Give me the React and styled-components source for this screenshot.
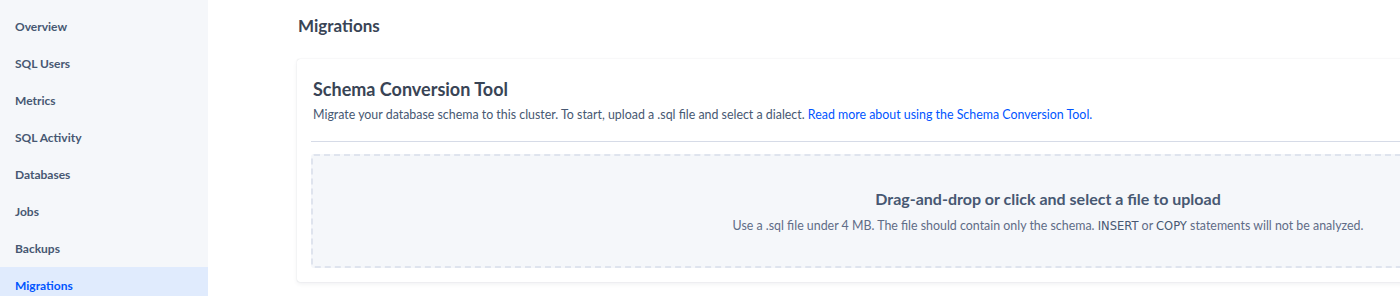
import React from "react";
import styled, { createGlobalStyle } from "styled-components";

const Global = createGlobalStyle`
  html, body { margin: 0; padding: 0; background: #ffffff; }
  body { font-family: Lato, "Open Sans", "Noto Sans", sans-serif; -webkit-font-smoothing: antialiased; }
  * { box-sizing: border-box; }
`;

const Layout = styled.div`
  display: flex;
  width: 1400px;
  height: 296px;
  overflow: hidden;
`;

const Sidebar = styled.nav`
  flex: 0 0 208px;
  background: #f5f7fa;
  padding-top: 8px;
  display: flex;
  flex-direction: column;
`;

const NavItem = styled.div`
  height: 37px;
  flex: 0 0 37px;
  display: flex;
  align-items: center;
  padding-left: 15px;
  font-size: 12px;
  font-weight: 700;
  color: ${(p) => (p.$active ? "#0055ff" : "#475872")};
  background: ${(p) => (p.$active ? "#e0ebfd" : "transparent")};
`;

const Main = styled.main`
  flex: 1;
  min-width: 0;
  padding: 14px 0 0 89px;
`;

const PageTitle = styled.h1`
  margin: 0 0 0 1px;
  height: 24px;
  line-height: 24px;
  font-size: 17px;
  font-weight: 700;
  color: #394455;
`;

const Card = styled.section`
  margin-top: 21px;
  width: 1502px;
  background: #fff;
  border-radius: 3px;
  box-shadow: 0 0 1px rgba(57, 68, 85, 0.25), 0 2px 4px rgba(57, 68, 85, 0.08);
  padding: 16px 14px 14px 14px;
`;

const CardTitle = styled.h2`
  margin: 0 0 0 2px;
  height: 28px;
  line-height: 28px;
  font-size: 18px;
  font-weight: 700;
  color: #394455;
`;

const Description = styled.p`
  margin: 0 0 0 2px;
  height: 24px;
  line-height: 24px;
  font-size: 12.4px;
  color: #475872;
`;

const Link = styled.a`
  color: #0055ff;
  text-decoration: none;
`;

const Divider = styled.hr`
  margin: 14px 0 12px 0;
  border: 0;
  border-top: 1px solid #d6dbe7;
`;

const DropZone = styled.div`
  height: 114px;
  background: #f5f7fa;
  border: 2px dashed #dfe4ee;
  border-radius: 3px;
  display: flex;
  flex-direction: column;
  align-items: center;
  justify-content: center;
  gap: 9px;
`;

const DropTitle = styled.div`
  font-size: 16px;
  font-weight: 700;
  color: #475872;
  line-height: 20px;
`;

const DropHint = styled.div`
  font-size: 12.4px;
  color: #5f6c87;
  line-height: 16px;
`;

const Mono = styled.span`
  font-family: "DejaVu Sans", sans-serif;
  font-size: 11.5px;
  color: #475872;
`;

const items = ["Overview", "SQL Users", "Metrics", "SQL Activity", "Databases", "Jobs", "Backups", "Migrations"];

export default function App() {
  return (
    <>
      <Global />
      <Layout>
        <Sidebar>
          {items.map((it) => (
            <NavItem key={it} $active={it === "Migrations"}>
              {it}
            </NavItem>
          ))}
        </Sidebar>
        <Main>
          <PageTitle>Migrations</PageTitle>
          <Card>
            <CardTitle>Schema Conversion Tool</CardTitle>
            <Description>
              Migrate your database schema to this cluster. To start, upload a .sql file and select a dialect.{" "}
              <Link href="#">Read more about using the Schema Conversion Tool.</Link>
            </Description>
            <Divider />
            <DropZone>
              <DropTitle>Drag-and-drop or click and select a file to upload</DropTitle>
              <DropHint>
                Use a .sql file under 4 MB. The file should contain only the schema. <Mono>INSERT</Mono> or{" "}
                <Mono>COPY</Mono> statements will not be analyzed.
              </DropHint>
            </DropZone>
          </Card>
        </Main>
      </Layout>
    </>
  );
}
